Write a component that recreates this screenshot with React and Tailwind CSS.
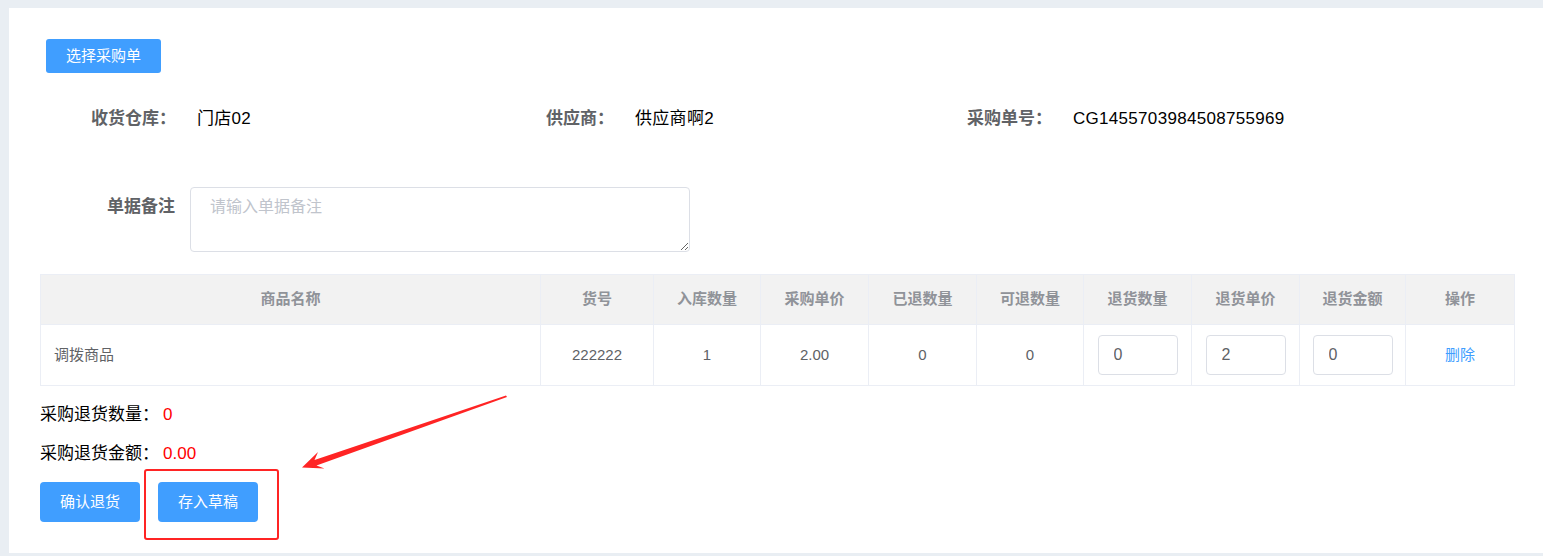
import { useState } from "react";

const cols = [500, 113, 107, 108, 108, 107, 108, 108, 106, 109];
const headers = ["商品名称", "货号", "入库数量", "采购单价", "已退数量", "可退数量", "退货数量", "退货单价", "退货金额", "操作"];

function CellInput({ value }) {
  const [val, setVal] = useState(value);
  return (
    <input
      value={val}
      onChange={(e) => setVal(e.target.value)}
      className="w-[80px] h-[40px] border border-[#dcdfe6] rounded-[4px] pl-[15px] text-[16px] text-[#606266] outline-none"
    />
  );
}

export default function App() {
  const [remark, setRemark] = useState("");

  return (
    <div className="relative min-h-[556px] bg-[#e9eef3] pt-[8px] pl-[9px] font-['Liberation_Sans','Noto_Sans_CJK_SC',sans-serif]">
      <div className="bg-white h-[545px] pt-[31px] pl-[31px] pr-[29px]">
        {/* select order button */}
        <button className="ml-[6px] h-[34px] w-[115px] rounded-[3px] bg-[#409eff] text-white text-[15px]">
          选择采购单
        </button>

        {/* info row */}
        <div className="mt-[26px] ml-[12px] h-[40px] grid grid-cols-[438px_438px_438px] items-center">
          {[
            ["收货仓库：", "门店02"],
            ["供应商：", "供应商啊2"],
            ["采购单号：", "CG1455703984508755969"],
          ].map(([label, value]) => (
            <div key={label} className="flex items-center">
              <span className="w-[124px] text-right text-[17px] font-bold text-[#606266]">{label}</span>
              <span className="ml-[21px] text-[17px] tracking-[0.3px] text-black">{value}</span>
            </div>
          ))}
        </div>

        {/* remark */}
        <div className="mt-[48px] flex">
          <div className="w-[150px] pr-[15px] h-[40px] leading-[40px] text-right text-[17px] font-bold text-[#606266]">
            单据备注
          </div>
          <textarea
            value={remark}
            onChange={(e) => setRemark(e.target.value)}
            placeholder="请输入单据备注"
            className="w-[500px] h-[65px] border border-[#dcdfe6] rounded-[4px] px-[19px] pt-[7px] text-[16px] leading-[24px] text-[#606266] placeholder:text-[#c0c4cc] outline-none"
          />
        </div>

        {/* table */}
        <table className="mt-[22px] w-[1474px] table-fixed border-collapse border border-[#ebeef5]">
          <colgroup>
            {cols.map((w, i) => (
              <col key={i} style={{ width: w }} />
            ))}
          </colgroup>
          <thead>
            <tr className="h-[50px] bg-[#f2f2f2]">
              {headers.map((h) => (
                <th key={h} className="border border-[#ebeef5] text-[15px] font-bold text-[#909399] text-center">
                  {h}
                </th>
              ))}
            </tr>
          </thead>
          <tbody>
            <tr className="h-[61px] text-[15px] text-[#606266]">
              <td className="border border-[#ebeef5] pl-[13px]">调拨商品</td>
              <td className="border border-[#ebeef5] text-center">222222</td>
              <td className="border border-[#ebeef5] text-center">1</td>
              <td className="border border-[#ebeef5] text-center">2.00</td>
              <td className="border border-[#ebeef5] text-center">0</td>
              <td className="border border-[#ebeef5] text-center">0</td>
              <td className="border border-[#ebeef5] text-center"><CellInput value="0" /></td>
              <td className="border border-[#ebeef5] text-center"><CellInput value="2" /></td>
              <td className="border border-[#ebeef5] text-center"><CellInput value="0" /></td>
              <td className="border border-[#ebeef5] text-center text-[#409eff]">删除</td>
            </tr>
          </tbody>
        </table>

        {/* summary */}
        <div className="mt-[17px] h-[24px] leading-[24px] text-[17px] text-black">
          采购退货数量：<span className="ml-[4px] text-[#ff0000]">0</span>
        </div>
        <div className="mt-[15px] h-[24px] leading-[24px] text-[17px] text-black">
          采购退货金额：<span className="ml-[4px] text-[#ff0000]">0.00</span>
        </div>

        {/* actions */}
        <div className="mt-[16px] flex gap-[18px]">
          <button className="w-[100px] h-[40px] rounded-[4px] bg-[#409eff] text-white text-[15px]">确认退货</button>
          <button className="w-[100px] h-[40px] rounded-[4px] bg-[#409eff] text-white text-[15px]">存入草稿</button>
        </div>
      </div>

      {/* annotation overlay */}
      <div className="absolute left-[144px] top-[469px] w-[135px] h-[71px] border-2 border-[#ff2424] rounded-[3px] pointer-events-none" />
      <svg className="absolute left-0 top-0 pointer-events-none" width="1543" height="556">
        <polygon
          points="506,395.5 507,397 316.5,465.5 324.5,468.5 302,467.5 318,452 314.5,460"
          fill="#ff2424"
        />
      </svg>
    </div>
  );
}
